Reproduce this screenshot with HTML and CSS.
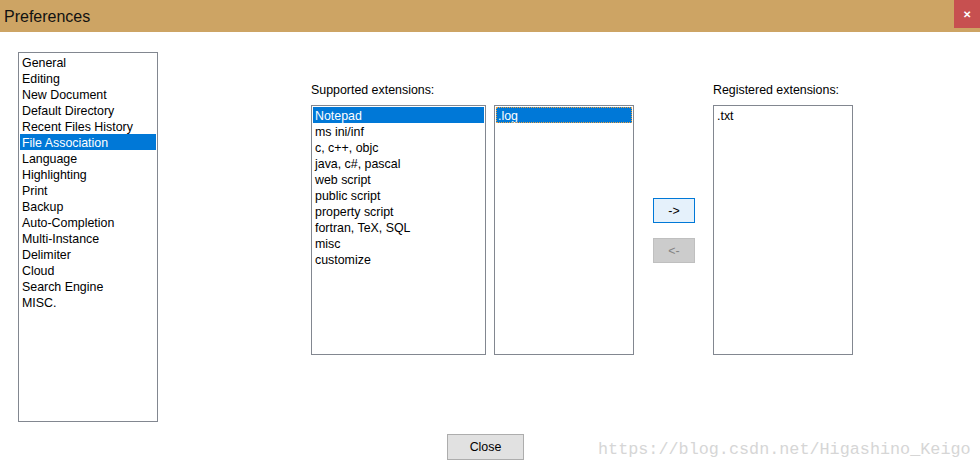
FILE: index.html
```html
<!DOCTYPE html>
<html lang="en">
<head>
  <meta charset="UTF-8">
  <title>Preferences</title>
  <link rel="stylesheet" href="styles.css">
</head>
<body>

<div class="dialog">
  <div class="titlebar">
    <span class="title">Preferences</span>
    <span class="close-x">&#x2715;</span>
  </div>

  <div class="content">
    <ul class="listbox categories">
      <li>General</li>
      <li>Editing</li>
      <li>New Document</li>
      <li>Default Directory</li>
      <li>Recent Files History</li>
      <li class="selected">File Association</li>
      <li>Language</li>
      <li>Highlighting</li>
      <li>Print</li>
      <li>Backup</li>
      <li>Auto-Completion</li>
      <li>Multi-Instance</li>
      <li>Delimiter</li>
      <li>Cloud</li>
      <li>Search Engine</li>
      <li>MISC.</li>
    </ul>

    <div class="assoc">
      <div class="col">
        <label>Supported extensions:</label>
        <div class="pair">
          <ul class="listbox groups">
            <li class="selected">Notepad</li>
            <li>ms ini/inf</li>
            <li>c, c++, objc</li>
            <li>java, c#, pascal</li>
            <li>web script</li>
            <li>public script</li>
            <li>property script</li>
            <li>fortran, TeX, SQL</li>
            <li>misc</li>
            <li>customize</li>
          </ul>
          <ul class="listbox exts">
            <li class="selected focused">.log</li>
          </ul>
        </div>
      </div>

      <div class="arrows">
        <button class="btn arrow active">-&gt;</button>
        <button class="btn arrow" disabled>&lt;-</button>
      </div>

      <div class="col">
        <label>Registered extensions:</label>
        <ul class="listbox exts">
          <li>.txt</li>
        </ul>
      </div>
    </div>
  </div>

  <div class="footer">
    <button class="btn close-btn">Close</button>
  </div>

  <div class="watermark">https://blog.csdn.net/Higashino_Keigo</div>
</div>

</body>
</html>
```

FILE: styles.css
```css
body {
  margin: 0;
  background: #fff;
  font-family: "Liberation Sans", Arial, sans-serif;
  font-size: 12.4px;
  color: #000;
}

.dialog {
  position: relative;
  width: 980px;
  height: 472px;
  overflow: hidden;
}

.titlebar {
  height: 32px;
  background: #cda464;
  display: flex;
  justify-content: space-between;
  align-items: flex-start;
}

.title {
  font-size: 16px;
  line-height: 33px;
  padding-left: 4px;
  color: #111;
}

.close-x {
  width: 26px;
  height: 28px;
  background: #c75050;
  color: #fff;
  font-size: 10px;
  font-weight: bold;
  display: flex;
  justify-content: center;
  align-items: center;
}

.content {
  display: flex;
  padding: 20px 0 0 18px;
}

.listbox {
  list-style: none;
  margin: 0;
  padding: 1px;
  border: 1px solid #828790;
  background: #fff;
}

.listbox li {
  height: 16px;
  line-height: 18px;
  padding-left: 2px;
  white-space: nowrap;
}

.listbox li.selected {
  background: #0078d7;
  color: #fff;
}

.listbox li.focused {
  outline: 1px dotted #e8a040;
  outline-offset: -1px;
}

.categories {
  width: 136px;
  height: 366px;
}

.assoc {
  display: flex;
  margin-left: 153px;
  margin-top: 30px;
}

.col label {
  display: block;
  height: 16px;
  line-height: 16px;
  margin-bottom: 7px;
}

.pair {
  display: flex;
  gap: 8px;
}

.groups {
  width: 171px;
  height: 246px;
}

.exts {
  width: 136px;
  height: 246px;
}

.arrows {
  display: flex;
  flex-direction: column;
  gap: 15px;
  margin: 116px 18px 0 19px;
}

.btn {
  font-family: inherit;
  font-size: 12.4px;
  background: #e1e1e1;
  border: 1px solid #adadad;
  color: #000;
  padding: 0;
}

.arrow {
  width: 42px;
  height: 25px;
}

.arrow.active {
  background: #e5f1fb;
  border-color: #0078d7;
}

.arrow:disabled {
  background: #cccccc;
  border-color: #bfbfbf;
  color: #838383;
}

.footer {
  padding: 12px 0 0 447px;
}

.close-btn {
  width: 77px;
  height: 26px;
}

.watermark {
  position: absolute;
  left: 598px;
  top: 440px;
  font-family: "Liberation Mono", "DejaVu Sans Mono", monospace;
  font-size: 16.8px;
  color: #d6d6d6;
}
```
